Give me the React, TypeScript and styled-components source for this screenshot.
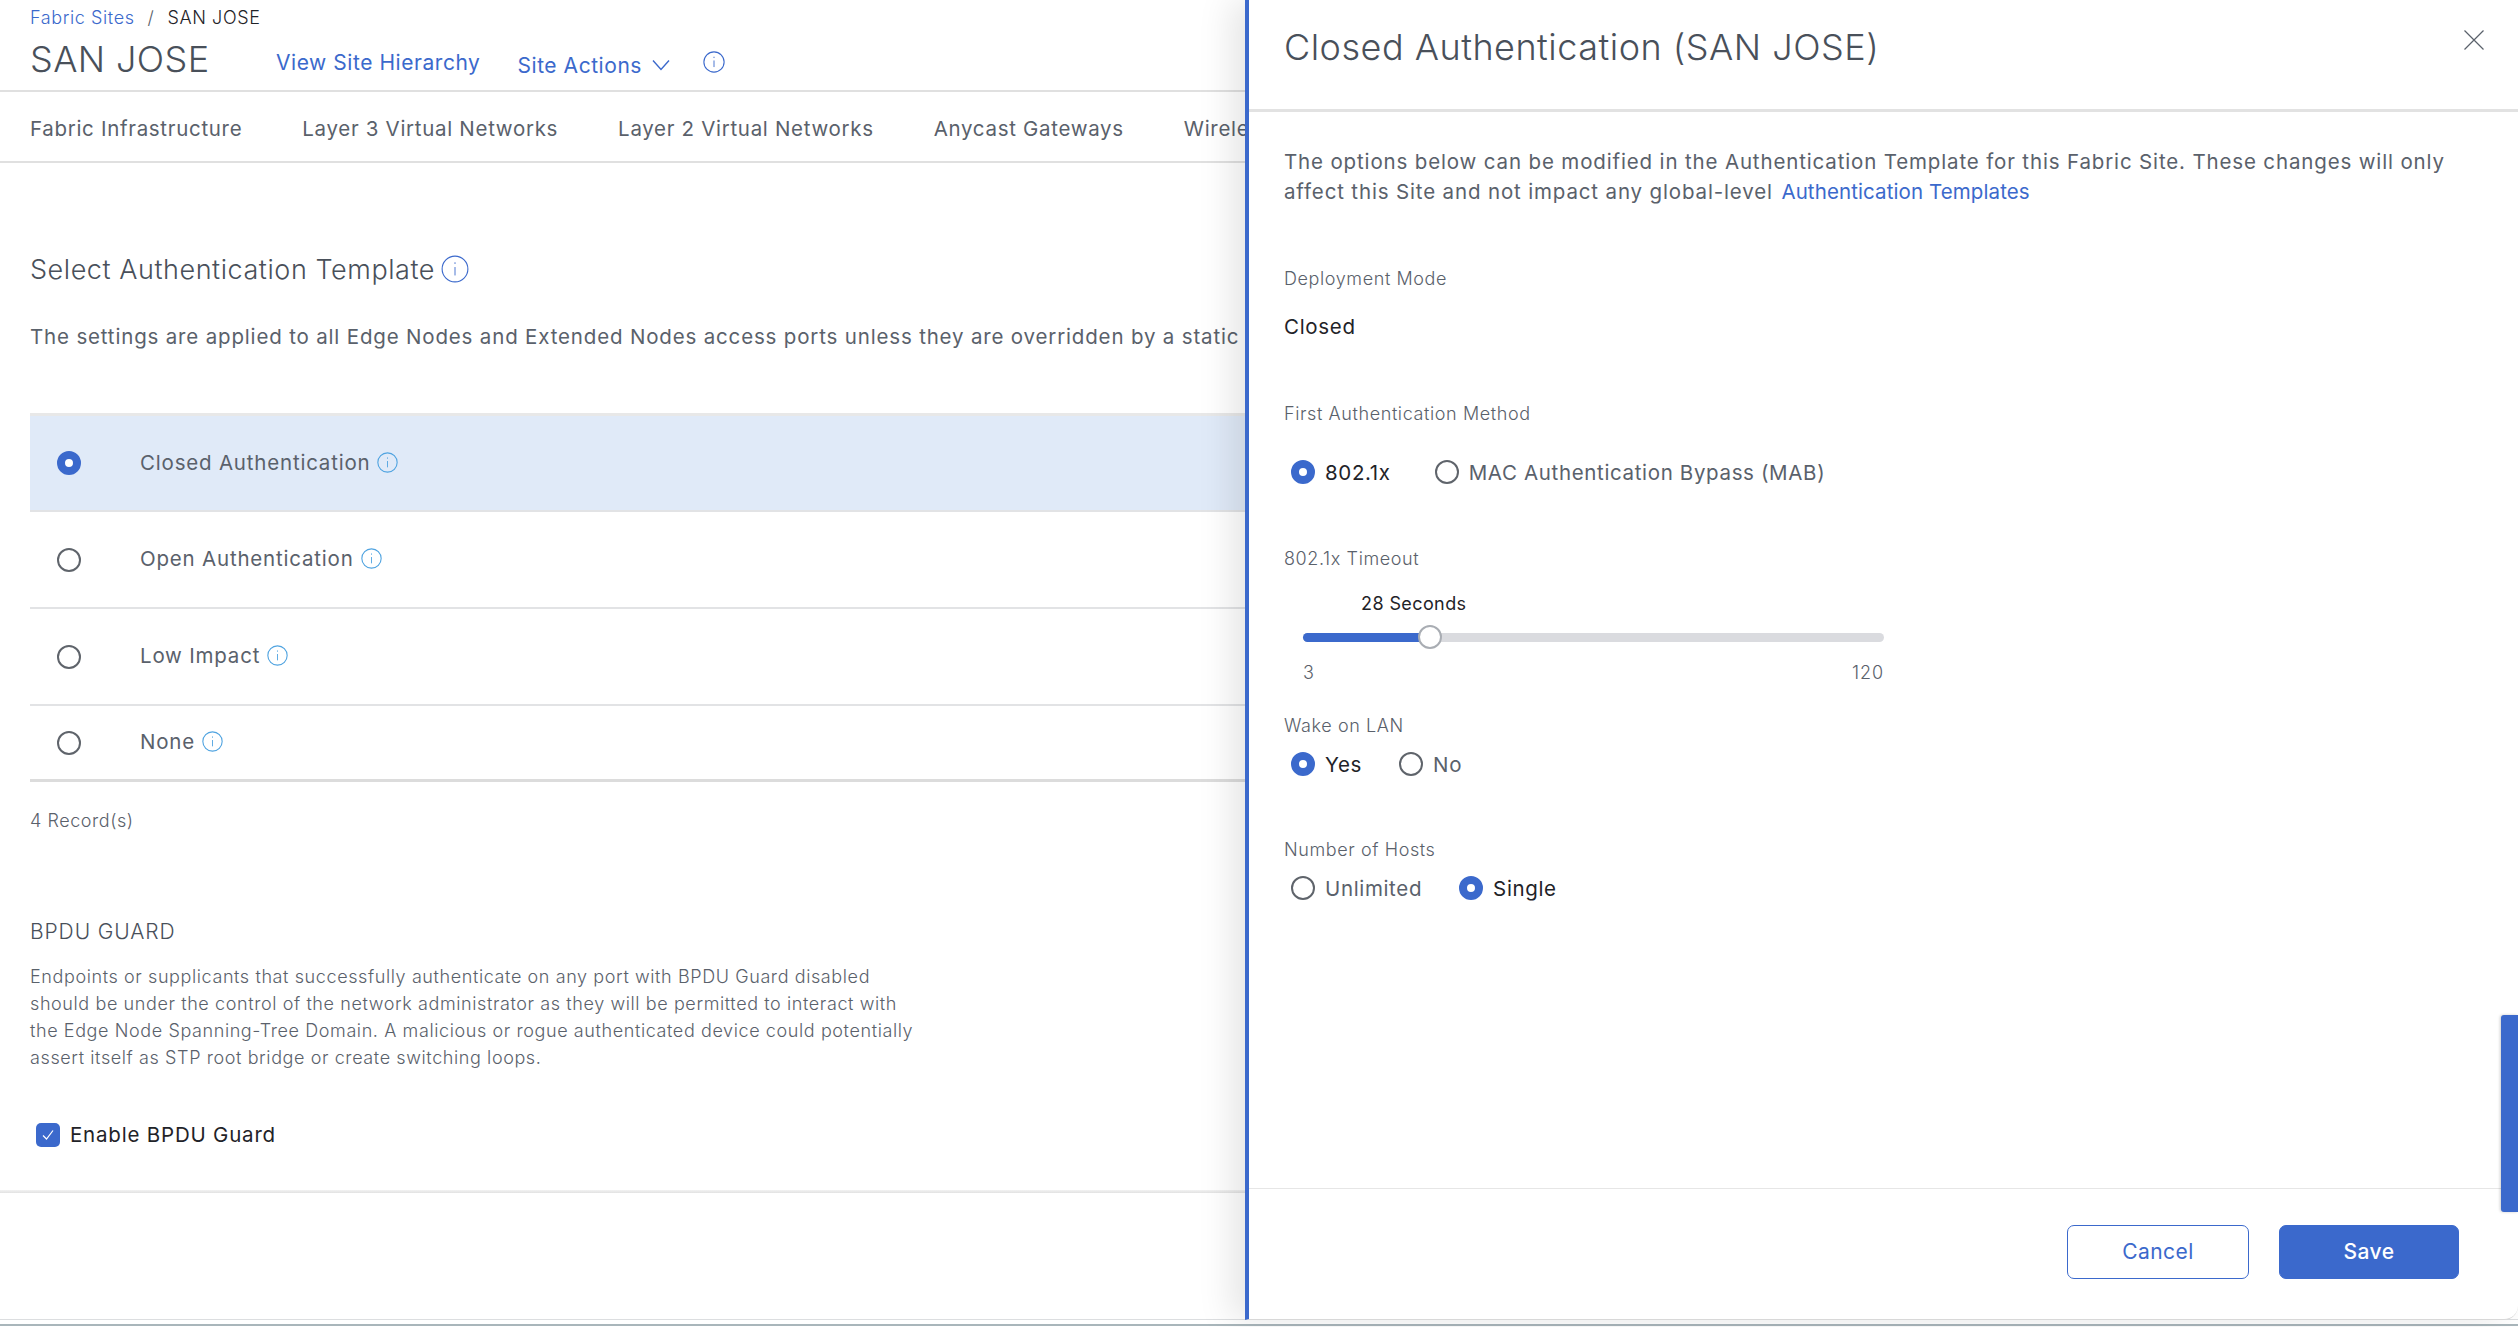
import React from "react";
import styled, { createGlobalStyle } from "styled-components";

const Global = createGlobalStyle`
  html, body { margin: 0; padding: 0; background: #fff; }
  body { font-family: Inter, "Noto Sans", sans-serif; overflow: hidden; }
  * { box-sizing: border-box; }
`;

const blue = "#3b69cc";
const grey = "#5a616b";

const Page = styled.div`
  position: relative;
  width: 2518px;
  height: 1327px;
  overflow: hidden;
  background: #fff;
`;
const Main = styled.div`
  height: 1320px;
  border-bottom: 1px solid #dcdee0;
  display: flex;
  flex-direction: column;
`;
const BottomStripe = styled.div`
  height: 2px;
  margin-top: 4px;
  background: #a9b6bb;
`;
const Header = styled.header`
  height: 92px;
  padding: 6px 30px 0;
  border-bottom: 2px solid #e0e0e0;
`;
const Crumbs = styled.div`
  display: flex;
  align-items: center;
  height: 22px;
  font-size: 18px;
  letter-spacing: 0.6px;
  font-weight: 300;
  color: #1f2328;
`;
const CrumbLink = styled.span`
  color: ${blue};
`;
const CrumbSep = styled.span`
  margin: 0 13px;
  color: ${grey};
`;
const TitleRow = styled.div`
  display: flex;
  align-items: center;
  height: 46px;
  margin-top: 8px;
`;
const Title = styled.h1`
  margin: 0 67px 0 0;
  font-size: 36px;
  letter-spacing: 0.4px;
  line-height: 46px;
  font-weight: 300;
  color: #49505a;
  width: 179px;
  white-space: nowrap;
`;
const HeaderLink = styled.span<{ $shift?: number }>`
  font-size: 21px;
  letter-spacing: 0.55px;
  font-weight: 400;
  color: ${blue};
  white-space: nowrap;
  position: relative;
  top: ${(p) => p.$shift ?? 0}px;
`;
const Actions = styled.span`
  display: inline-flex;
  align-items: center;
  gap: 10px;
  margin-left: 37px;
  margin-right: 33px;
  position: relative;
  top: 6px;
`;
const HeaderInfo = styled.span`
  display: inline-flex;
  position: relative;
  top: 3px;
`;
const Tabs = styled.nav`
  display: flex;
  align-items: center;
  gap: 60px;
  height: 71px;
  padding: 0 30px;
  border-bottom: 2px solid #e0e0e0;
  font-size: 20.5px;
  letter-spacing: 0.69px;
  color: ${grey};
  white-space: nowrap;
`;
const Tab = styled.span`
  position: relative;
  top: 2px;
`;
const Content = styled.div`
  flex: 1;
  padding: 0 30px;
`;
const SectionTitle = styled.h2`
  display: flex;
  align-items: center;
  gap: 6px;
  margin: 88px 0 0;
  height: 36px;
  font-size: 27px;
  letter-spacing: 0.55px;
  font-weight: 300;
  color: #49505a;
  white-space: nowrap;
`;
const Description = styled.p`
  margin: 35px 0 0;
  height: 30px;
  font-size: 20.5px;
  letter-spacing: 0.83px;
  line-height: 30px;
  color: ${grey};
  white-space: nowrap;
`;
const Table = styled.div`
  margin-top: 61px;
  width: 1300px;
  border-top: 3px solid #e8e8e8;
  border-bottom: 3px solid #dcdcdc;
`;
const Row = styled.div<{ $h: number; $active?: boolean; $last?: boolean }>`
  display: flex;
  align-items: center;
  height: ${(p) => p.$h}px;
  padding-left: 27px;
  background: ${(p) => (p.$active ? "#e0eaf8" : "#fff")};
  border-bottom: ${(p) => (p.$last ? "none" : "2px solid #e2e3e5")};
  font-size: 20.5px;
  letter-spacing: 0.8px;
  color: ${grey};
`;
const RowLabel = styled.span`
  display: inline-flex;
  align-items: center;
  gap: 7px;
  margin-left: 59px;
  position: relative;
  top: -1px;
`;
const Radio = styled.span<{ $on?: boolean }>`
  flex: none;
  display: inline-block;
  width: 24px;
  height: 24px;
  border-radius: 50%;
  background: #fff;
  border: ${(p) => (p.$on ? `8px solid ${blue}` : "2px solid #5f646b")};
`;
const Records = styled.div`
  margin-top: 27px;
  font-size: 18px;
  letter-spacing: 0.55px;
  font-weight: 300;
  line-height: 24px;
  color: ${grey};
`;
const Subhead = styled.h3`
  margin: 86px 0 0;
  font-size: 21px;
  letter-spacing: 0.9px;
  line-height: 26px;
  font-weight: 300;
  color: #49505a;
`;
const Paragraph = styled.p`
  margin: 18px 0 0;
  width: 890px;
  font-size: 18px;
  letter-spacing: 0.6px;
  line-height: 27px;
  font-weight: 300;
  color: ${grey};
`;
const CheckRow = styled.label`
  display: flex;
  align-items: center;
  gap: 10px;
  margin: 51px 0 0 6px;
  font-size: 20.5px;
  letter-spacing: 0.8px;
  color: #1f2328;
`;
const CheckBox = styled.span`
  display: flex;
  align-items: center;
  justify-content: center;
  width: 24px;
  height: 24px;
  border-radius: 5px;
  background: ${blue};
`;
const PageRule = styled.div`
  height: 3px;
  margin: 43px -30px 0;
  background: linear-gradient(#f2f2f2, #e2e2e2);
`;

const Panel = styled.aside`
  position: absolute;
  top: 0;
  left: 1245px;
  right: 0;
  height: 1320px;
  display: flex;
  flex-direction: column;
  background: #fff;
  border-left: 4px solid ${blue};
  border-bottom: 1px solid #d8d8d8;
  border-bottom-right-radius: 14px;
  box-shadow: -14px 0 34px rgba(0, 0, 0, 0.1);
`;
const PanelHead = styled.div`
  display: flex;
  align-items: center;
  justify-content: space-between;
  flex: none;
  height: 112px;
  padding: 0 34px 15px 35px;
  border-bottom: 3px solid #e2e2e2;
`;
const PanelTitle = styled.h2`
  margin: 0;
  font-size: 36px;
  letter-spacing: 0.5px;
  font-weight: 300;
  color: #49505a;
  white-space: nowrap;
`;
const CloseSlot = styled.span`
  display: inline-flex;
  position: relative;
  top: -7px;
`;
const PanelBody = styled.div`
  flex: 1;
  padding: 35px 35px 0;
`;
const Intro = styled.p`
  margin: 0;
  width: 1180px;
  font-size: 20.5px;
  letter-spacing: 0.85px;
  line-height: 30px;
  color: ${grey};
`;
const IntroLink = styled.span`
  color: ${blue};
  letter-spacing: 0.1px;
  margin-left: 2px;
`;
const Label = styled.div<{ $top: number }>`
  margin-top: ${(p) => p.$top}px;
  font-size: 18px;
  letter-spacing: 0.6px;
  line-height: 24px;
  font-weight: 300;
  color: ${grey};
`;
const Value = styled.div`
  margin-top: 22px;
  font-size: 20.5px;
  letter-spacing: 0.7px;
  line-height: 28px;
  color: #1f2328;
`;
const RadioRow = styled.div<{ $top: number; $gap?: number }>`
  display: flex;
  align-items: center;
  gap: ${(p) => p.$gap ?? 37}px;
  height: 28px;
  margin-top: ${(p) => p.$top}px;
  padding-left: 7px;
`;
const Option = styled.span<{ $on?: boolean }>`
  display: inline-flex;
  align-items: center;
  gap: 10px;
  font-size: 20.5px;
  letter-spacing: 0.65px;
  color: ${(p) => (p.$on ? "#1f2328" : grey)};
  white-space: nowrap;
`;
const SliderBox = styled.div`
  width: 581px;
  margin: 21px 0 0 19px;
`;
const SliderValue = styled.div`
  margin-left: 58px;
  font-size: 18px;
  letter-spacing: 0.4px;
  line-height: 24px;
  color: #1f2328;
`;
const Track = styled.div`
  position: relative;
  height: 9px;
  margin-top: 17px;
  border-radius: 5px;
  background: #dadbdf;
`;
const Fill = styled.div`
  height: 100%;
  border-radius: 5px 0 0 5px;
  background: ${blue};
`;
const Thumb = styled.div`
  position: absolute;
  top: -8px;
  width: 24px;
  height: 24px;
  margin-left: -12px;
  border-radius: 50%;
  background: #fff;
  border: 2px solid #a9adb3;
`;
const Scale = styled.div`
  display: flex;
  justify-content: space-between;
  margin-top: 19px;
  font-size: 18px;
  letter-spacing: 0.9px;
  line-height: 24px;
  font-weight: 300;
  color: ${grey};
`;
const PanelFoot = styled.div`
  display: flex;
  justify-content: flex-end;
  gap: 30px;
  flex: none;
  height: 131px;
  padding: 36px 59px 0 0;
  border-top: 1px solid #e6e6e6;
`;
const Button = styled.button<{ $primary?: boolean }>`
  width: ${(p) => (p.$primary ? 180 : 182)}px;
  height: 54px;
  padding: 0 0 2px;
  border-radius: 7px;
  border: 1px solid ${blue};
  background: ${(p) => (p.$primary ? blue : "#fff")};
  color: ${(p) => (p.$primary ? "#fff" : blue)};
  font-family: inherit;
  font-size: 21px;
  letter-spacing: 0.4px;
  font-weight: ${(p) => (p.$primary ? 500 : 400)};
`;
const ScrollHandle = styled.div`
  position: absolute;
  top: 1015px;
  right: 0;
  width: 17px;
  height: 197px;
  border-radius: 3px 0 0 3px;
  background: ${blue};
  box-shadow: -1px 0 3px rgba(0, 0, 0, 0.2);
`;

const Info = ({ size = 20, color = "#4fa3e0" }: { size?: number; color?: string }) => (
  <svg width={size} height={size} viewBox="0 0 20 20" fill="none" style={{ flex: "none" }}>
    <circle cx="10" cy="10" r="9.2" stroke={color} strokeWidth={22 / size} />
    <path d="M10 8.6V14.6M10 5.2V6.4" stroke={color} strokeWidth={18 / size} />
  </svg>
);

const Chevron = () => (
  <svg width="18" height="12" viewBox="0 0 18 12" fill="none">
    <path d="M1 1.5L9 10.5L17 1.5" stroke={blue} strokeWidth="1.4" />
  </svg>
);

const Check = () => (
  <svg width="14" height="12" viewBox="0 0 14 12" fill="none">
    <path d="M2 6.5L5.5 10L12 1.5" stroke="#fff" strokeWidth="1.2" />
  </svg>
);

const Close = () => (
  <svg width="20" height="20" viewBox="0 0 20 20" fill="none">
    <path d="M0.5 0.5L19.5 19.5M19.5 0.5L0.5 19.5" stroke="#5a616b" strokeWidth="1.2" />
  </svg>
);

const rows = [
  { name: "Closed Authentication", h: 96, on: true },
  { name: "Open Authentication", h: 97 },
  { name: "Low Impact", h: 97 },
  { name: "None", h: 73 },
];

export default function App() {
  return (
    <Page>
      <Global />
      <Main>
        <Header>
          <Crumbs>
            <CrumbLink>Fabric Sites</CrumbLink>
            <CrumbSep>/</CrumbSep>
            <span>SAN JOSE</span>
          </Crumbs>
          <TitleRow>
            <Title>SAN JOSE</Title>
            <HeaderLink $shift={3}>View Site Hierarchy</HeaderLink>
            <Actions>
              <HeaderLink>Site Actions</HeaderLink>
              <Chevron />
            </Actions>
            <HeaderInfo>
              <Info size={22} color={blue} />
            </HeaderInfo>
          </TitleRow>
        </Header>
        <Tabs>
          <Tab>Fabric Infrastructure</Tab>
          <Tab>Layer 3 Virtual Networks</Tab>
          <Tab>Layer 2 Virtual Networks</Tab>
          <Tab>Anycast Gateways</Tab>
          <Tab>Wireless</Tab>
        </Tabs>
        <Content>
          <SectionTitle>
            Select Authentication Template
            <Info size={28} color={blue} />
          </SectionTitle>
          <Description>
            The settings are applied to all Edge Nodes and Extended Nodes access ports unless they are overridden by a static
          </Description>
          <Table>
            {rows.map((r, i) => (
              <Row key={r.name} $h={r.h} $active={r.on} $last={i === rows.length - 1}>
                <Radio $on={r.on} />
                <RowLabel>
                  {r.name}
                  <Info size={21} />
                </RowLabel>
              </Row>
            ))}
          </Table>
          <Records>4 Record(s)</Records>
          <Subhead>BPDU GUARD</Subhead>
          <Paragraph>
            Endpoints or supplicants that successfully authenticate on any port with BPDU Guard disabled should be under the control of the network administrator as they will be permitted to interact with the Edge Node Spanning-Tree Domain. A malicious or rogue authenticated device could potentially assert itself as STP root bridge or create switching loops.
          </Paragraph>
          <CheckRow>
            <CheckBox>
              <Check />
            </CheckBox>
            Enable BPDU Guard
          </CheckRow>
          <PageRule />
        </Content>
      </Main>
      <BottomStripe />
      <Panel>
        <PanelHead>
          <PanelTitle>Closed Authentication (SAN JOSE)</PanelTitle>
          <CloseSlot>
            <Close />
          </CloseSlot>
        </PanelHead>
        <PanelBody>
          <Intro>
            The options below can be modified in the Authentication Template for this Fabric Site. These changes will only affect this Site and not impact any global-level <IntroLink>Authentication Templates</IntroLink>
          </Intro>
          <Label $top={60}>Deployment Mode</Label>
          <Value>Closed</Value>
          <Label $top={61}>First Authentication Method</Label>
          <RadioRow $top={32} $gap={44}>
            <Option $on><Radio $on />802.1x</Option>
            <Option><Radio />MAC Authentication Bypass (MAB)</Option>
          </RadioRow>
          <Label $top={61}>802.1x Timeout</Label>
          <SliderBox>
            <SliderValue>28 Seconds</SliderValue>
            <Track>
              <Fill style={{ width: "21.9%" }} />
              <Thumb style={{ left: "21.9%" }} />
            </Track>
            <Scale>
              <span>3</span>
              <span>120</span>
            </Scale>
          </SliderBox>
          <Label $top={29}>Wake on LAN</Label>
          <RadioRow $top={12}>
            <Option $on><Radio $on />Yes</Option>
            <Option><Radio />No</Option>
          </RadioRow>
          <Label $top={60}>Number of Hosts</Label>
          <RadioRow $top={12}>
            <Option><Radio />Unlimited</Option>
            <Option $on><Radio $on />Single</Option>
          </RadioRow>
        </PanelBody>
        <PanelFoot>
          <Button>Cancel</Button>
          <Button $primary>Save</Button>
        </PanelFoot>
        <ScrollHandle />
      </Panel>
    </Page>
  );
}
